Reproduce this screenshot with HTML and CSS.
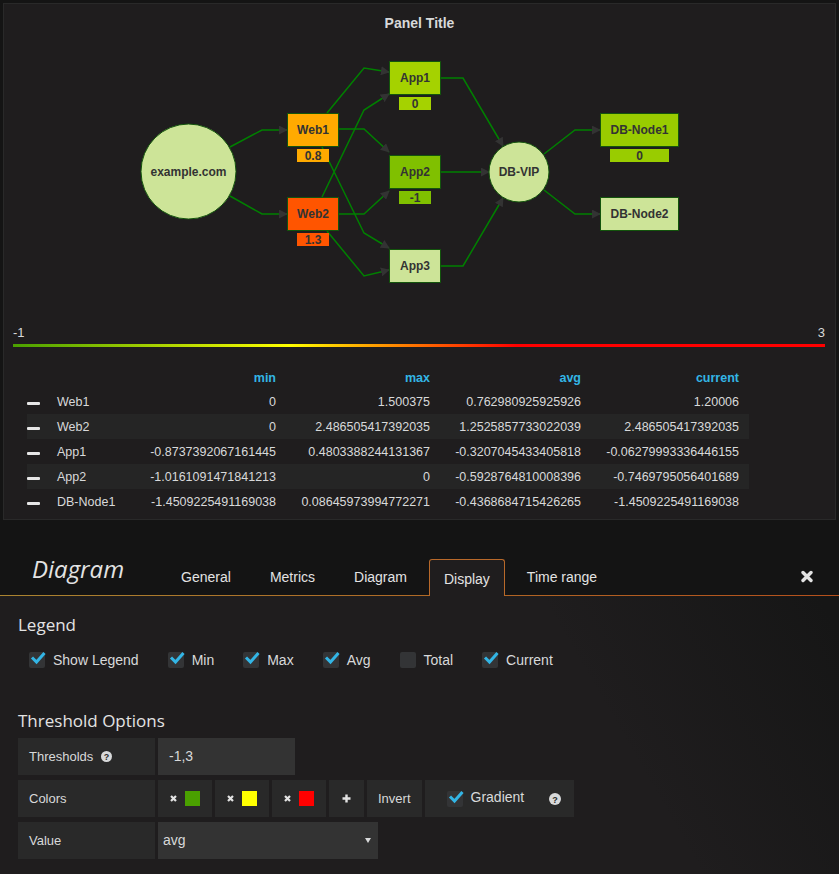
FILE: index.html
```html
<!DOCTYPE html>
<html lang="en">
<head>
    <meta charset="UTF-8">
    <title>Diagram Panel</title>
    <link rel="stylesheet" href="styles.css">
</head>
<body>

<!-- Panel -->
<div class="panel">
    <div class="panel-title">Panel Title</div>

    <svg class="diagram" width="831" height="290" viewBox="4 30 831 290">
        <defs>
            <marker id="arrow" viewBox="0 0 10 10" refX="9" refY="5" markerWidth="9" markerHeight="9" markerUnits="userSpaceOnUse" orient="auto">
                <path d="M0,0 L10,5 L0,10 z" fill="#333"></path>
            </marker>
        </defs>

        <!-- edges -->
        <g class="edges">
            <polyline points="230,147 262,130 287,130"></polyline>
            <polyline points="230,196 262,214 287,214"></polyline>
            <polyline points="327,113 364,68 389,72"></polyline>
            <polyline points="322,197 364,110 389,94"></polyline>
            <polyline points="339,129 364,129 389,152"></polyline>
            <polyline points="339,214 364,214 389,191"></polyline>
            <polyline points="322,147 364,233 389,248"></polyline>
            <polyline points="327,231 364,276 389,270"></polyline>
            <polyline points="441,78 463,78 503,146"></polyline>
            <polyline points="441,172 489,172"></polyline>
            <polyline points="441,266 463,266 503,198"></polyline>
            <polyline points="544,154 575,130 600,130"></polyline>
            <polyline points="544,190 575,214 600,214"></polyline>
        </g>

        <!-- nodes -->
        <circle class="node" cx="188.5" cy="171.5" r="47.5" fill="#cde498"></circle>
        <text class="label" x="188.5" y="175.8">example.com</text>

        <rect class="node" x="287.5" y="113.5" width="51" height="33" fill="#ffaa00"></rect>
        <text class="label" x="313" y="134.3">Web1</text>
        <rect x="297" y="149" width="32" height="13" fill="#ffaa00"></rect>
        <text class="label" x="313" y="159.8">0.8</text>

        <rect class="node" x="287.5" y="197.5" width="51" height="33" fill="#ff5500"></rect>
        <text class="label" x="313" y="218.3">Web2</text>
        <rect x="297" y="233" width="32" height="13" fill="#ff5500"></rect>
        <text class="label" x="313" y="243.8">1.3</text>

        <rect class="node" x="389.5" y="61.5" width="51" height="33" fill="#a5d200"></rect>
        <text class="label" x="415" y="82.3">App1</text>
        <rect x="399" y="97" width="32" height="13" fill="#a5d200"></rect>
        <text class="label" x="415" y="107.8">0</text>

        <rect class="node" x="389.5" y="155.5" width="51" height="33" fill="#80c000"></rect>
        <text class="label" x="415" y="176.3">App2</text>
        <rect x="399" y="191" width="32" height="13" fill="#80c000"></rect>
        <text class="label" x="415" y="201.8">-1</text>

        <rect class="node" x="389.5" y="249.5" width="51" height="33" fill="#cde498"></rect>
        <text class="label" x="415" y="270.3">App3</text>

        <circle class="node" cx="519" cy="172" r="30" fill="#cde498"></circle>
        <text class="label" x="519" y="176.3">DB-VIP</text>

        <rect class="node" x="600.5" y="113.5" width="78" height="33" fill="#99cc00"></rect>
        <text class="label" x="639.5" y="134.3">DB-Node1</text>
        <rect x="610" y="149" width="59" height="13" fill="#99cc00"></rect>
        <text class="label" x="639.5" y="159.8">0</text>

        <rect class="node" x="600.5" y="197.5" width="78" height="33" fill="#cde498"></rect>
        <text class="label" x="639.5" y="218.3">DB-Node2</text>
    </svg>

    <div class="scale">
        <div class="scale-labels"><span>-1</span><span>3</span></div>
        <div class="scale-bar"></div>
    </div>

    <table class="legend">
        <colgroup>
            <col style="width:30px">
            <col style="width:93px">
            <col style="width:136px">
            <col style="width:154px">
            <col style="width:151px">
            <col style="width:158px">
        </colgroup>
        <thead>
            <tr><th></th><th></th><th>min</th><th>max</th><th>avg</th><th>current</th></tr>
        </thead>
        <tbody>
            <tr><td><span class="dash"></span></td><td class="name">Web1</td><td>0</td><td>1.500375</td><td>0.762980925925926</td><td>1.20006</td></tr>
            <tr><td><span class="dash"></span></td><td class="name">Web2</td><td>0</td><td>2.486505417392035</td><td>1.2525857733022039</td><td>2.486505417392035</td></tr>
            <tr><td><span class="dash"></span></td><td class="name">App1</td><td>-0.8737392067161445</td><td>0.4803388244131367</td><td>-0.3207045433405818</td><td>-0.06279993336446155</td></tr>
            <tr><td><span class="dash"></span></td><td class="name">App2</td><td>-1.0161091471841213</td><td>0</td><td>-0.5928764810008396</td><td>-0.7469795056401689</td></tr>
            <tr><td><span class="dash"></span></td><td class="name">DB-Node1</td><td>-1.4509225491169038</td><td>0.08645973994772271</td><td>-0.4368684715426265</td><td>-1.4509225491169038</td></tr>
        </tbody>
    </table>
</div>

<!-- Editor -->
<div class="editor">
    <div class="editor-header">
        <div class="editor-title">Diagram</div>
        <ul class="tabs">
            <li class="tab">General</li>
            <li class="tab">Metrics</li>
            <li class="tab">Diagram</li>
            <li class="tab active">Display</li>
            <li class="tab">Time range</li>
        </ul>
        <a class="close">
            <svg width="12" height="13" viewBox="0 0 12 13"><path d="M2,2.5 L10,10.5 M10,2.5 L2,10.5" stroke="#e3e3e3" stroke-width="3.4" stroke-linecap="round"></path></svg>
        </a>
    </div>

    <div class="editor-body">
        <h5 class="section-title">Legend</h5>
        <div class="checks">
            <label class="check"><svg width="18" height="17" viewBox="0 0 18 17"><rect x="0" y="1" width="16" height="16" rx="2" fill="#333436"></rect><polyline points="3,6.5 7.5,11 15.5,2" fill="none" stroke="#33b5e5" stroke-width="3"></polyline></svg>Show Legend</label>
            <label class="check"><svg width="18" height="17" viewBox="0 0 18 17"><rect x="0" y="1" width="16" height="16" rx="2" fill="#333436"></rect><polyline points="3,6.5 7.5,11 15.5,2" fill="none" stroke="#33b5e5" stroke-width="3"></polyline></svg>Min</label>
            <label class="check"><svg width="18" height="17" viewBox="0 0 18 17"><rect x="0" y="1" width="16" height="16" rx="2" fill="#333436"></rect><polyline points="3,6.5 7.5,11 15.5,2" fill="none" stroke="#33b5e5" stroke-width="3"></polyline></svg>Max</label>
            <label class="check"><svg width="18" height="17" viewBox="0 0 18 17"><rect x="0" y="1" width="16" height="16" rx="2" fill="#333436"></rect><polyline points="3,6.5 7.5,11 15.5,2" fill="none" stroke="#33b5e5" stroke-width="3"></polyline></svg>Avg</label>
            <label class="check"><svg width="18" height="17" viewBox="0 0 18 17"><rect x="0" y="1" width="16" height="16" rx="2" fill="#333436"></rect></svg>Total</label>
            <label class="check"><svg width="18" height="17" viewBox="0 0 18 17"><rect x="0" y="1" width="16" height="16" rx="2" fill="#333436"></rect><polyline points="3,6.5 7.5,11 15.5,2" fill="none" stroke="#33b5e5" stroke-width="3"></polyline></svg>Current</label>
        </div>

        <h5 class="section-title threshold-title">Threshold Options</h5>

        <div class="form-row">
            <div class="form-label">Thresholds
                <svg class="help" width="11" height="11" viewBox="0 0 11 11"><circle cx="5.5" cy="5.5" r="5.5" fill="#d8d9da"></circle><text x="5.5" y="9" text-anchor="middle">?</text></svg>
            </div>
            <div class="form-input">-1,3</div>
        </div>

        <div class="form-row">
            <div class="form-label">Colors</div>
            <div class="form-item color-item">
                <svg class="x-icon" width="7" height="7" viewBox="0 0 7 7"><path d="M1,1 L6,6 M6,1 L1,6" stroke="#e3e3e3" stroke-width="2.2"></path></svg>
                <span class="swatch" style="background:#4aa000"></span>
            </div>
            <div class="form-item color-item">
                <svg class="x-icon" width="7" height="7" viewBox="0 0 7 7"><path d="M1,1 L6,6 M6,1 L1,6" stroke="#e3e3e3" stroke-width="2.2"></path></svg>
                <span class="swatch" style="background:#ffff00"></span>
            </div>
            <div class="form-item color-item">
                <svg class="x-icon" width="7" height="7" viewBox="0 0 7 7"><path d="M1,1 L6,6 M6,1 L1,6" stroke="#e3e3e3" stroke-width="2.2"></path></svg>
                <span class="swatch" style="background:#ff0000"></span>
            </div>
            <div class="form-item plus-item">
                <svg width="9" height="9" viewBox="0 0 9 9"><path d="M4.5,0.5 V8.5 M0.5,4.5 H8.5" stroke="#e3e3e3" stroke-width="2.4"></path></svg>
            </div>
            <div class="form-item">Invert</div>
            <div class="form-item gradient-item">
                <svg width="18" height="17" viewBox="0 0 18 17"><rect x="0" y="1" width="16" height="16" rx="2" fill="#333436"></rect><polyline points="3,6.5 7.5,11 15.5,2" fill="none" stroke="#33b5e5" stroke-width="3"></polyline></svg>
                <span class="gradient-label">Gradient</span>
                <svg class="help" width="12" height="12" viewBox="0 0 12 12"><circle cx="6" cy="6" r="6" fill="#d8d9da"></circle><text x="6" y="9.8" text-anchor="middle">?</text></svg>
            </div>
        </div>

        <div class="form-row">
            <div class="form-label">Value</div>
            <div class="form-select">avg<span class="caret"></span></div>
        </div>
    </div>
</div>

</body>
</html>
```

FILE: styles.css
```css
/* Basic Styling */
body {
    font-family: "Liberation Sans", Arial, sans-serif;
    background-color: #141414;
    color: #d8d9da;
    margin: 0;
    padding: 0;
}

/* Panel */
.panel {
    margin: 3px 3px 0 3px;
    background-color: #1f1d1e;
    border: 1px solid #292929;
    padding-bottom: 5px;
}
.panel-title {
    text-align: center;
    font-weight: bold;
    font-size: 14px;
    line-height: 16px;
    padding-top: 11px;
    height: 15px;
}
.diagram {
    display: block;
}
.edges polyline {
    fill: none;
    stroke: #008000;
    stroke-width: 1.5;
    marker-end: url(#arrow);
}
.node {
    stroke: #13540c;
    stroke-width: 1;
}
.label {
    font-family: "Liberation Sans", Arial, sans-serif;
    font-size: 12px;
    font-weight: bold;
    fill: #333;
    text-anchor: middle;
}

.scale {
    padding: 5px 10px 0 9px;
}
.scale-labels {
    display: flex;
    justify-content: space-between;
    font-size: 13px;
    line-height: 16px;
}
.scale-bar {
    margin-top: 3px;
    height: 3px;
    background: linear-gradient(to right, #4aa000 0%, #ffff00 34%, #ff0000 62%, #ff0000 100%);
}

.legend {
    margin: 20px 0 0 23px;
    border-collapse: collapse;
    table-layout: fixed;
    width: 722px;
    font-size: 12.5px;
}
.legend th {
    height: 22px;
    padding: 0 10px 0 0;
    text-align: right;
    color: #33b5e5;
    font-weight: bold;
}
.legend td {
    height: 25px;
    padding: 0 10px 0 0;
    text-align: right;
    white-space: nowrap;
}
.legend tbody tr:nth-child(even) {
    background-color: #252525;
}
.legend td:first-child {
    text-align: left;
}
.legend td.name {
    text-align: left;
}
.dash {
    display: inline-block;
    width: 13px;
    height: 3px;
    margin-top: 3px;
    background-color: #e6e6e6;
    border-radius: 1px;
    vertical-align: middle;
}

/* Editor */
.editor-header {
    display: flex;
    align-items: flex-end;
    height: 75px;
    padding-left: 32px;
    border-bottom: 1px solid #b07a2a;
    border-image: linear-gradient(to right, #aa8430, #b5501c) 1;
}
.editor-title {
    font-family: "Open Sans", sans-serif;
    font-style: italic;
    font-size: 24px;
    line-height: 36px;
    color: #e3e3e3;
    margin: 0 40px 8px 0;
}
.tabs {
    display: flex;
    list-style: none;
    margin: 0 0 -1px 0;
    padding: 0;
}
.tab {
    font-size: 14px;
    line-height: 35px;
    padding: 0 16px;
    margin-right: 5px;
    border: 1px solid transparent;
    border-bottom: 0;
    color: #e3e3e3;
}
.tab.active {
    background-color: #1f1d1e;
    border-color: #b8692a;
    border-radius: 3px 3px 0 0;
    padding: 4px 14px 0 14px;
    line-height: 31px;
    height: 32px;
}
.close {
    margin-left: auto;
    margin-right: 26px;
    margin-bottom: 12px;
    line-height: 0;
}

.editor-body {
    min-height: 259px;
    padding: 19px 18px 0 18px;
    background-color: #1f1d1e;
    background-image: linear-gradient(60deg, transparent 70%, #161616 98%);
}
.section-title {
    font-family: "Open Sans", sans-serif;
    font-weight: normal;
    font-size: 17px;
    line-height: 20px;
    color: #e3e3e3;
    margin: 0;
}
.threshold-title {
    margin: 41px 0 7px 0;
}

.checks {
    display: flex;
    margin: 15px 0 0 11px;
    height: 20px;
    align-items: center;
}
.check {
    display: flex;
    align-items: center;
    font-size: 14px;
    margin-right: 29px;
}
.check svg {
    margin-right: 6px;
    margin-top: -2px;
}

.form-row {
    display: flex;
    margin-bottom: 5px;
}
.form-label,
.form-item,
.form-input,
.form-select {
    height: 37px;
    line-height: 37px;
    box-sizing: border-box;
    margin-right: 3px;
}
.form-label {
    width: 137px;
    padding: 0 11px;
    background-color: #292929;
    font-size: 13px;
    display: flex;
    align-items: center;
}
.help {
    margin-left: 8px;
}
.help text {
    font-family: "Liberation Sans", Arial, sans-serif;
    font-weight: bold;
    font-size: 9px;
    fill: #292929;
}
.form-input {
    width: 137px;
    padding: 0 11px;
    background-color: #333;
    font-size: 14px;
}
.form-item {
    display: flex;
    align-items: center;
    padding: 0 11px;
    background-color: #292929;
    font-size: 13px;
}
.color-item {
    padding: 0 12px;
}
.x-icon {
    margin-right: 8px;
}
.swatch {
    display: inline-block;
    width: 15px;
    height: 15px;
}
.plus-item {
    padding: 0 13px;
}
.gradient-item {
    padding: 0 13px 0 22px;
}
.gradient-item .gradient-label {
    font-size: 14px;
    margin-left: 6px;
    margin-top: -3px;
}
.gradient-item .help {
    margin-left: 25px;
}
.form-select {
    width: 220px;
    padding: 0 5px;
    background-color: #333;
    font-size: 14px;
    position: relative;
}
.caret {
    position: absolute;
    right: 7px;
    top: 16px;
    width: 0;
    height: 0;
    border-left: 3px solid transparent;
    border-right: 3px solid transparent;
    border-top: 5px solid #d8d9da;
}
```
